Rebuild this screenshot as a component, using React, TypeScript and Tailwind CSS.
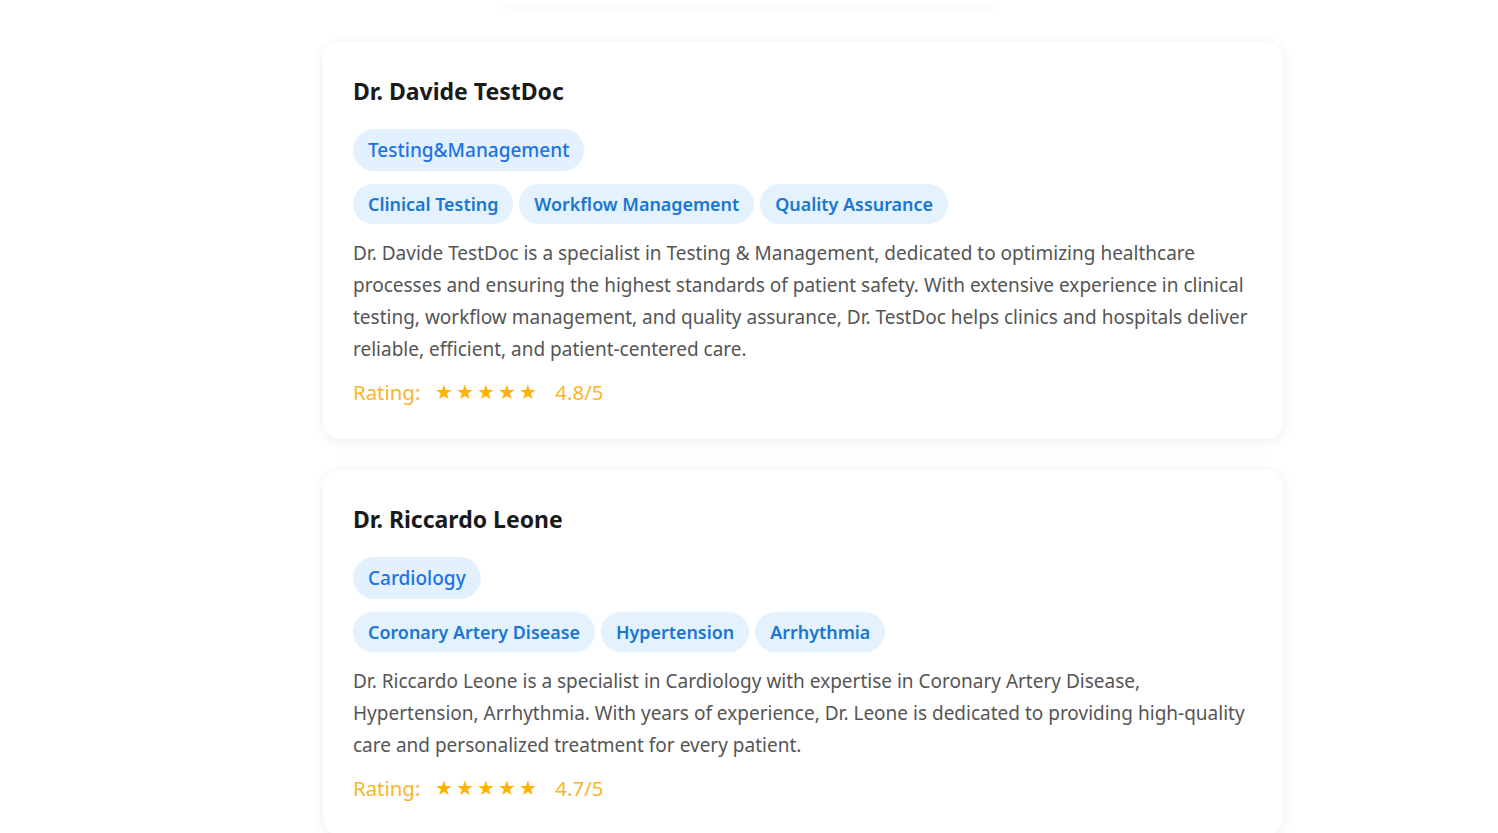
import React from "react";

interface Doctor {
  name: string;
  specialty: string;
  tags: string[];
  bio: string;
  rating: string;
}

const doctors: Doctor[] = [
  {
    name: "Dr. Davide TestDoc",
    specialty: "Testing&Management",
    tags: ["Clinical Testing", "Workflow Management", "Quality Assurance"],
    bio: "Dr. Davide TestDoc is a specialist in Testing & Management, dedicated to optimizing healthcare processes and ensuring the highest standards of patient safety. With extensive experience in clinical testing, workflow management, and quality assurance, Dr. TestDoc helps clinics and hospitals deliver reliable, efficient, and patient-centered care.",
    rating: "4.8/5"
  },
  {
    name: "Dr. Riccardo Leone",
    specialty: "Cardiology",
    tags: ["Coronary Artery Disease", "Hypertension", "Arrhythmia"],
    bio: "Dr. Riccardo Leone is a specialist in Cardiology with expertise in Coronary Artery Disease, Hypertension, Arrhythmia. With years of experience, Dr. Leone is dedicated to providing high-quality care and personalized treatment for every patient.",
    rating: "4.7/5"
  }
];

function DoctorCard({ doc }: { doc: Doctor }) {
  return (
    <article className="w-[960px] rounded-2xl bg-white px-[30px] pt-[34px] pb-[32px] shadow-[0_2px_14px_rgba(0,0,0,0.07)]">
      <h2 className="text-[23px] font-bold leading-[30px] text-[#1a1a1a]">{doc.name}</h2>
      <div className="mt-[23px] flex">
        <span className="rounded-full bg-[#e3f0fe] px-[15px] py-[8px] text-[19px] font-medium leading-[26px] text-[#1a73e8]">
          {doc.specialty}
        </span>
      </div>
      <div className="mt-[13px] flex flex-wrap gap-[6px]">
        {doc.tags.map((t) => (
          <span
            key={t}
            className="rounded-full bg-[#e3f2fd] px-[15px] py-[8px] text-[17.9px] font-semibold leading-[24px] text-[#1976d2]"
          >
            {t}
          </span>
        ))}
      </div>
      <p className="mt-[13px] text-[19px] leading-[32px] text-[#555]">{doc.bio}</p>
      <div className="mt-[12px] flex items-center text-[20.4px] leading-[30px] text-[#f9b52a]">
        <span>Rating:</span>
        <span className="ml-[15px] text-[20px] tracking-[3px] text-[#ffb300]">★★★★★</span>
        <span className="ml-[15px]">{doc.rating}</span>
      </div>
    </article>
  );
}

export default function App() {
  return (
    <div className="min-h-[833px] bg-white font-['Noto_Sans',sans-serif]">
      <div className="mx-[500px] h-[6px] rounded-b-2xl shadow-[0_2px_8px_rgba(0,0,0,0.03)]" />
      <div className="flex flex-col gap-[31px] pt-[36px] pl-[323px]">
        {doctors.map((d) => (
          <DoctorCard key={d.name} doc={d} />
        ))}
      </div>
    </div>
  );
}
